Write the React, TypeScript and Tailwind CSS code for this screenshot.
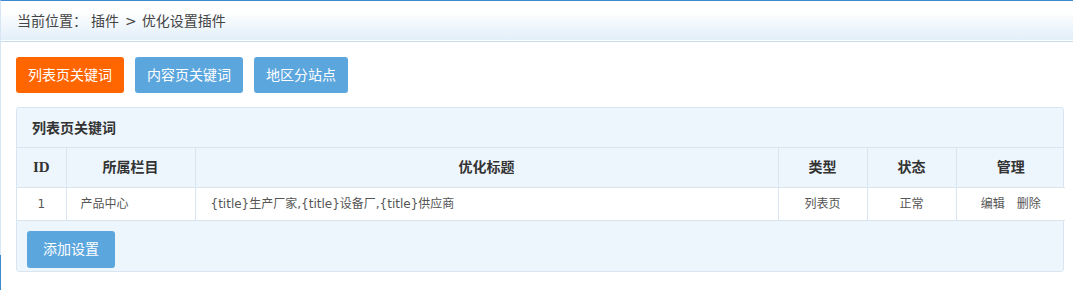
import React from 'react';

const COLS = [
  { key: 'id', label: 'ID', w: 'w-[49px]' },
  { key: 'cat', label: '所属栏目', w: 'w-[129px]' },
  { key: 'title', label: '优化标题', w: 'w-[583px]' },
  { key: 'type', label: '类型', w: 'w-[89px]' },
  { key: 'status', label: '状态', w: 'w-[89px]' },
  { key: 'manage', label: '管理', w: 'w-[109px]' },
];

const TABS = ['列表页关键词', '内容页关键词', '地区分站点'];

export default function App() {
  return (
    <div className="relative min-h-[290px] bg-white border-t border-[#3d89cf] border-l border-l-[#d6e6f4] font-['DejaVu_Sans','Noto_Sans_CJK_SC',sans-serif] text-[#333]">
      {/* left strip, darker bit at the bottom */}
      <div className="absolute left-[-1px] top-[254px] w-px h-[36px] bg-[#3d89cf]" />

      {/* Breadcrumb */}
      <div className="h-[41px] flex items-center pl-4 bg-gradient-to-b from-white from-25% to-[#e1eef9] border-b border-[#c6dcee] shadow-[inset_0_-1px_0_#fff] text-[14px] leading-[20px] text-[#444]">
        <span>当前位置：</span>
        <span className="ml-[4px]">插件</span>
        <span className="ml-[6px]">&gt;</span>
        <span className="ml-[5px]">优化设置插件</span>
      </div>

      <div className="pl-[15px] w-[1063px]">
        {/* Tabs */}
        <div className="flex gap-[11px] pt-[15px]">
          {TABS.map((t, i) => (
            <button
              key={t}
              className={`h-[36px] px-[12px] rounded-[3px] text-[14px] leading-[20px] text-white ${i === 0 ? 'bg-[#ff6600]' : 'bg-[#5ca6de]'}`}
            >
              {t}
            </button>
          ))}
        </div>

        {/* Panel */}
        <div className="mt-[14px] rounded-[3px] border border-[#d9e6f2] bg-[#eef6fd]">
          <div className="h-[40px] flex items-center px-[15px] text-[14px] font-bold leading-[20px] text-[#333] border-b border-[#d9e6f2]">
            列表页关键词
          </div>

          <table className="w-full border-collapse table-fixed">
            <thead>
              <tr className="h-[39px] border-b border-[#d9e6f2]">
                {COLS.map((c, i) => (
                  <th
                    key={c.key}
                    className={`${c.w} p-0 text-center text-[14px] font-bold leading-[20px] text-[#333] ${i > 0 ? 'border-l border-[#d9e6f2]' : ''} ${c.key === 'id' ? "font-['Liberation_Serif',serif] text-[15px]" : ''}`}
                  >
                    {c.label}
                  </th>
                ))}
              </tr>
            </thead>
            <tbody>
              <tr className="h-[33px] bg-white border-b border-[#d9e6f2] text-[12px] leading-[18px] text-[#555]">
                <td className="p-0 text-center">1</td>
                <td className="px-[14px] border-l border-[#d9e6f2]">产品中心</td>
                <td className="px-[15px] border-l border-[#d9e6f2]">{'{title}生产厂家,{title}设备厂,{title}供应商'}</td>
                <td className="p-0 text-center border-l border-[#d9e6f2]">列表页</td>
                <td className="p-0 text-center border-l border-[#d9e6f2]">正常</td>
                <td className="p-0 border-l border-[#d9e6f2]">
                  <div className="flex justify-center gap-[12px]">
                    <span>编辑</span>
                    <span>删除</span>
                  </div>
                </td>
              </tr>
            </tbody>
          </table>

          <div className="px-[10px] pt-[10px] pb-[3px]">
            <button className="h-[37px] px-4 rounded-[3px] bg-[#5ca6de] text-white text-[14px] leading-[20px]">
              添加设置
            </button>
          </div>
        </div>
      </div>
    </div>
  );
}
